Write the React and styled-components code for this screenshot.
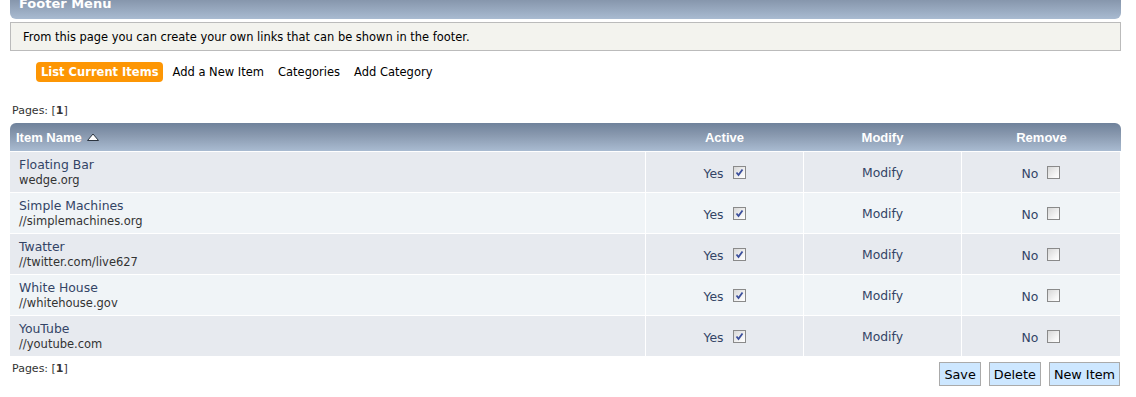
import React from "react";
import styled, { createGlobalStyle } from "styled-components";

const Global = createGlobalStyle`
  html, body { margin: 0; padding: 0; background: #fff; }
  body { font-family: "DejaVu Sans", Verdana, sans-serif; color: #000; overflow: hidden; }
`;

const gradient = "linear-gradient(to bottom, #6f829b 0%, #8797ad 40%, #a9bbd1 100%)";

const Page = styled.div`
  padding: 0 15px 0 10px;
  display: flex;
  flex-direction: column;
`;

const TitleBar = styled.div`
  margin-top: -12px;
  height: 31px;
  display: flex;
  align-items: center;
  padding-left: 9px;
  border-radius: 6px;
  background: ${gradient};
  color: #fff;
  font-weight: bold;
  font-size: 13px;
`;

const Description = styled.div`
  margin-top: 3px;
  height: 27px;
  display: flex;
  align-items: center;
  padding: 0 12px;
  border: 1px solid #bbb;
  background: #f3f3ee;
  font-size: 11.45px;
`;

const Tabs = styled.nav`
  display: flex;
  gap: 4px;
  margin-top: 11px;
  padding-left: 26px;
  height: 20px;
`;

const Tab = styled.span`
  display: flex;
  align-items: center;
  padding: 0 5px;
  border-radius: 4px;
  font-size: 11.5px;
  font-weight: ${(p) => (p.$active ? "bold" : "normal")};
  color: ${(p) => (p.$active ? "#fff" : "#000")};
  background: ${(p) => (p.$active ? "#fd9604" : "transparent")};
`;

const Pages = styled.div`
  font-size: 11px;
  color: #333;
  padding-left: 2px;
  margin-top: ${(p) => p.$top}px;
`;

const Table = styled.div`
  margin-top: 6px;
  display: flex;
  flex-direction: column;
  gap: 1px;
`;

const cols = "635px 157px 157px 1fr";

const HeadRow = styled.div`
  display: grid;
  grid-template-columns: ${cols};
  column-gap: 1px;
  height: 28px;
  background: ${gradient};
  border-radius: 6px 6px 0 0;
`;

const Th = styled.div`
  display: flex;
  align-items: center;
  justify-content: ${(p) => (p.$left ? "flex-start" : "center")};
  padding-left: ${(p) => (p.$left ? "6px" : "0")};
  gap: 5px;
  color: #fff;
  font-family: "Liberation Sans", Arial, sans-serif;
  font-weight: bold;
  font-size: 13px;
`;

const Row = styled.div`
  display: grid;
  grid-template-columns: ${cols};
  column-gap: 1px;
  height: 40px;
  background: #fff;
  margin-right: 1px;
`;

const Td = styled.div`
  background: ${(p) => (p.$alt ? "#f0f4f7" : "#e7eaef")};
  display: flex;
  align-items: center;
  justify-content: center;
  gap: 9px;
  font-size: 12.4px;
  color: #334466;
  padding-top: ${(p) => (p.$low ? "3px" : "0")};
  box-sizing: border-box;
`;

const NameCell = styled(Td)`
  flex-direction: column;
  align-items: flex-start;
  justify-content: flex-start;
  gap: 0;
  padding: 5px 0 0 9px;
`;

const Name = styled.div`
  font-size: 12.4px;
  color: #334466;
  line-height: 16px;
`;

const Url = styled.div`
  font-size: 11.5px;
  color: #333;
  line-height: 15px;
`;

const Box = styled.span`
  width: 11px;
  height: 11px;
  border: 1px solid #8a8a8a;
  background: linear-gradient(135deg, #d7d7d7 0%, #f6f6f6 70%, #fff 100%);
  display: inline-flex;
  align-items: center;
  justify-content: center;
  margin-top: -3px;
`;

const Footer = styled.div`
  display: flex;
  justify-content: space-between;
  align-items: flex-start;
  padding-right: 1px;
`;

const Buttons = styled.div`
  display: flex;
  gap: 8px;
  margin-top: 6px;
`;

const Button = styled.button`
  height: 24px;
  padding: 0 4px;
  font-family: "DejaVu Sans", Verdana, sans-serif;
  font-size: 12.8px;
  color: #000;
  background: #cde7ff;
  border: 1px solid #aaa;
  border-radius: 0;
`;

const SortArrow = () => (
  <svg width="12" height="8" viewBox="0 0 12 8">
    <path d="M0.5 7.5 L6 1 L11.5 7.5 Z" fill="#fff" stroke="#2b3440" strokeWidth="1" />
  </svg>
);

const Check = ({ checked }) => (
  <Box>
    {checked && (
      <svg width="9" height="9" viewBox="0 0 9 9">
        <path d="M1.5 4.5 L3.5 7 L7.5 1.5" fill="none" stroke="#3b4f9c" strokeWidth="1.8" />
      </svg>
    )}
  </Box>
);

const items = [
  ["Floating Bar", "wedge.org"],
  ["Simple Machines", "//simplemachines.org"],
  ["Twatter", "//twitter.com/live627"],
  ["White House", "//whitehouse.gov"],
  ["YouTube", "//youtube.com"],
];

export default function App() {
  return (
    <>
      <Global />
      <Page>
        <TitleBar>Footer Menu</TitleBar>
        <Description>From this page you can create your own links that can be shown in the footer.</Description>
        <Tabs>
          <Tab $active>List Current Items</Tab>
          <Tab>Add a New Item</Tab>
          <Tab>Categories</Tab>
          <Tab>Add Category</Tab>
        </Tabs>
        <Pages $top={22}>
          Pages: [<b>1</b>]
        </Pages>
        <Table>
          <HeadRow>
            <Th $left>
              Item Name <SortArrow />
            </Th>
            <Th>Active</Th>
            <Th>Modify</Th>
            <Th>Remove</Th>
          </HeadRow>
          {items.map(([name, url], i) => (
            <Row key={name}>
              <NameCell $alt={i % 2 === 1}>
                <Name>{name}</Name>
                <Url>{url}</Url>
              </NameCell>
              <Td $alt={i % 2 === 1} $low>
                Yes <Check checked />
              </Td>
              <Td $alt={i % 2 === 1}>Modify</Td>
              <Td $alt={i % 2 === 1} $low>
                No <Check />
              </Td>
            </Row>
          ))}
        </Table>
        <Footer>
          <Pages $top={6}>
            Pages: [<b>1</b>]
          </Pages>
          <Buttons>
            <Button>Save</Button>
            <Button>Delete</Button>
            <Button>New Item</Button>
          </Buttons>
        </Footer>
      </Page>
    </>
  );
}
